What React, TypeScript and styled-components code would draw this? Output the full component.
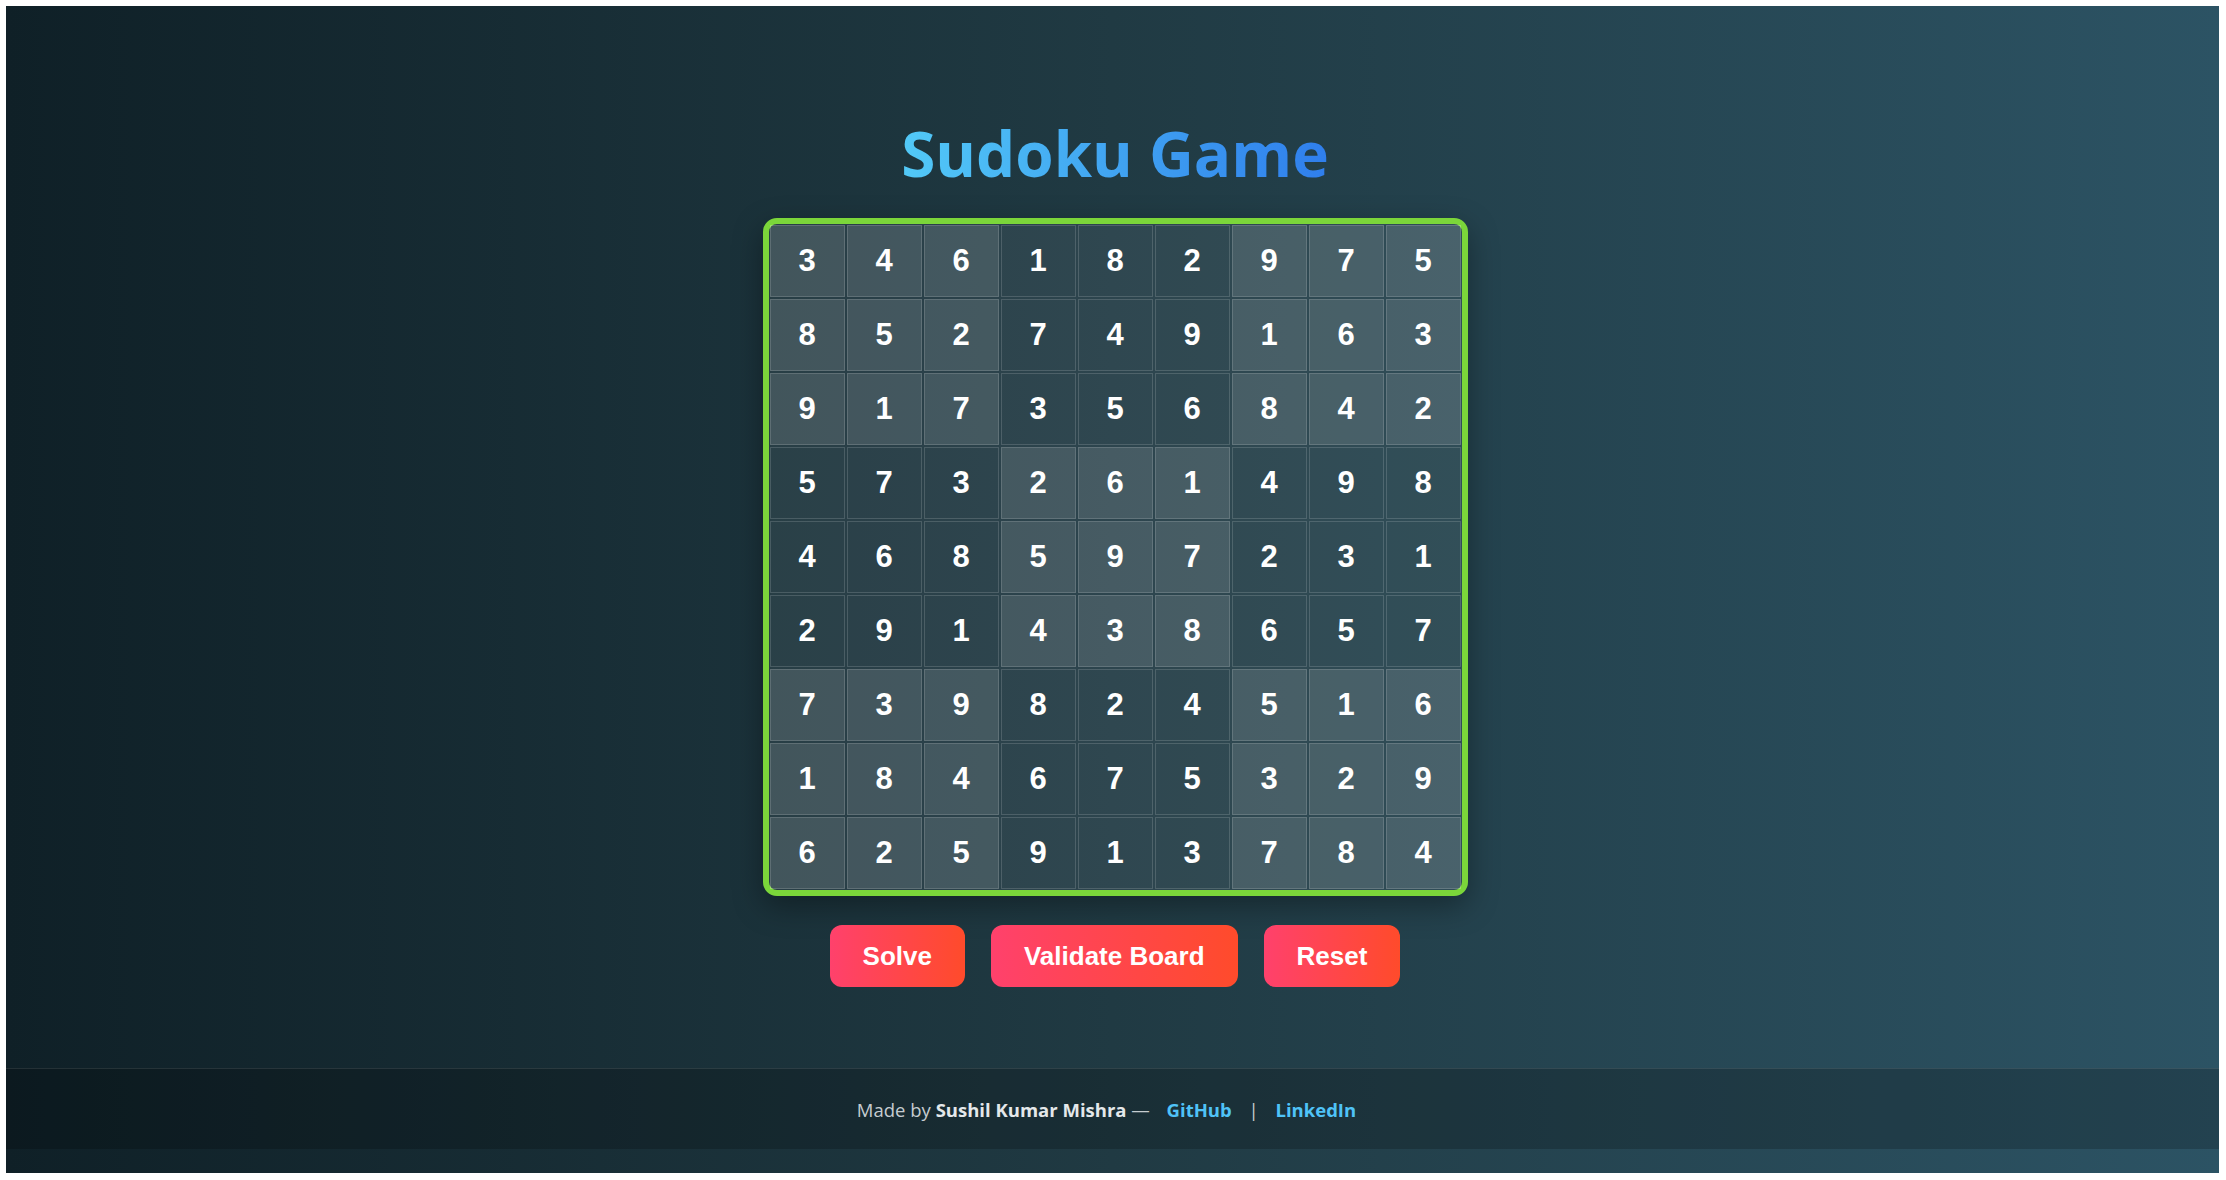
import React from "react";
import styled, { createGlobalStyle } from "styled-components";

const GlobalStyle = createGlobalStyle`
  html, body {
    margin: 0;
    background: #ffffff;
  }
  body {
    padding: 6px 7px 7px 6px;
    box-sizing: border-box;
    height: 100vh;
  }
  #root {
    height: 100%;
  }
  * {
    box-sizing: border-box;
  }
`;

const Page = styled.div`
  height: 100%;
  display: flex;
  flex-direction: column;
  background: linear-gradient(to right, #0f2027, #203a43, #2c5364);
  padding-bottom: 24px;
  font-family: "Open Sans", "Noto Sans", sans-serif;
`;

const Main = styled.main`
  flex: 1;
  display: flex;
  flex-direction: column;
  align-items: center;
  padding-top: 105px;
  padding-left: 5px;
`;

const Title = styled.h1`
  margin: 0 0 23px;
  font-family: "Open Sans", "Noto Sans", sans-serif;
  font-weight: 700;
  font-size: 62px;
  line-height: 1.362;
  background: linear-gradient(90deg, #52c9f7, #2f7eec);
  -webkit-background-clip: text;
  background-clip: text;
  color: transparent;
`;

const Board = styled.div`
  display: grid;
  grid-template-columns: repeat(9, 75px);
  grid-template-rows: repeat(9, 72px);
  gap: 2px;
  padding: 1px;
  border: 6px solid #7bd63a;
  border-radius: 14px;
  background: rgba(255, 255, 255, 0.06);
  box-shadow: 0 10px 30px rgba(0, 0, 0, 0.35);
`;

const Cell = styled.div<{ $light: boolean }>`
  display: flex;
  align-items: center;
  justify-content: center;
  border: 1px solid rgba(255, 255, 255, 0.15);
  background: ${(p) =>
    p.$light ? "rgba(255, 255, 255, 0.12)" : "rgba(255, 255, 255, 0.01)"};
  color: #ffffff;
  font-family: "Liberation Sans", Arial, sans-serif;
  font-weight: 700;
  font-size: 31px;
`;

const Actions = styled.div`
  display: flex;
  gap: 26px;
  margin-top: 29px;
`;

const ActionButton = styled.button`
  border: none;
  border-radius: 12px;
  padding: 16px 33px;
  background: linear-gradient(90deg, #ff416c, #ff4b2b);
  color: #ffffff;
  font-family: "Liberation Sans", Arial, sans-serif;
  font-weight: 700;
  font-size: 26px;
  line-height: 30px;
  cursor: pointer;
`;

const Footer = styled.footer`
  height: 81px;
  display: flex;
  align-items: center;
  justify-content: center;
  background: rgba(0, 0, 0, 0.2);
  border-top: 1px solid rgba(255, 255, 255, 0.1);
  font-family: "Open Sans", "Noto Sans", sans-serif;
  font-size: 18.5px;
  color: #c5ccd0;
`;

const FooterText = styled.p`
  margin: 0;
`;

const Author = styled.strong`
  color: #e4e8ea;
  font-weight: 700;
`;

const FooterLink = styled.a`
  color: #4fc3f7;
  font-weight: 700;
  text-decoration: none;
  margin: 0 12px;
`;

const board: number[][] = [
  [3, 4, 6, 1, 8, 2, 9, 7, 5],
  [8, 5, 2, 7, 4, 9, 1, 6, 3],
  [9, 1, 7, 3, 5, 6, 8, 4, 2],
  [5, 7, 3, 2, 6, 1, 4, 9, 8],
  [4, 6, 8, 5, 9, 7, 2, 3, 1],
  [2, 9, 1, 4, 3, 8, 6, 5, 7],
  [7, 3, 9, 8, 2, 4, 5, 1, 6],
  [1, 8, 4, 6, 7, 5, 3, 2, 9],
  [6, 2, 5, 9, 1, 3, 7, 8, 4],
];

export default function App() {
  return (
    <>
      <GlobalStyle />
      <Page>
        <Main>
          <Title>Sudoku Game</Title>
          <Board>
            {board.map((row, r) =>
              row.map((v, c) => (
                <Cell
                  key={`${r}-${c}`}
                  $light={(Math.floor(r / 3) + Math.floor(c / 3)) % 2 === 0}
                >
                  {v}
                </Cell>
              ))
            )}
          </Board>
          <Actions>
            <ActionButton>Solve</ActionButton>
            <ActionButton>Validate Board</ActionButton>
            <ActionButton>Reset</ActionButton>
          </Actions>
        </Main>
        <Footer>
          <FooterText>
            Made by <Author>Sushil Kumar Mishra</Author> —{" "}
            <FooterLink href="#">GitHub</FooterLink> |{" "}
            <FooterLink href="#">LinkedIn</FooterLink>
          </FooterText>
        </Footer>
      </Page>
    </>
  );
}
